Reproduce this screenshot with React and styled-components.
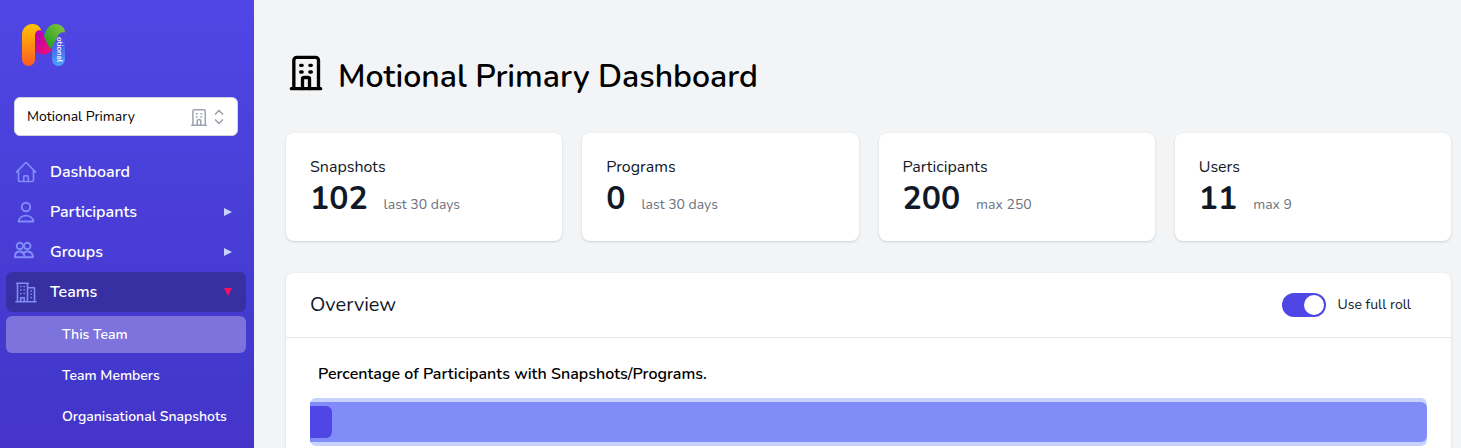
import { useState } from "react";
import styled, { createGlobalStyle } from "styled-components";

const GlobalStyle = createGlobalStyle`
  *, *::before, *::after {
    box-sizing: border-box;
  }
  body {
    margin: 0;
    background: #f3f4f6;
    color: #000;
    font-family: Nunito, Lato, "Open Sans", sans-serif;
    font-size: 16px;
    line-height: 24px;
  }
  button, input, select {
    font: inherit;
  }
`;

const Shell = styled.div`
  display: flex;
  height: 100vh;
  overflow: hidden;
`;

const Sidebar = styled.aside`
  flex: none;
  display: flex;
  flex-direction: column;
  width: 254px;
  padding: 20px 8px 0 6px;
  background: linear-gradient(to bottom, #4f46e5, #4338cc 85%, #4634ca);
`;

const LogoLink = styled.a`
  display: block;
  width: 52px;
  height: 52px;
  margin-left: 12px;

  svg {
    display: block;
  }
`;

const TeamPicker = styled.label`
  display: flex;
  align-items: center;
  position: relative;
  margin: 25px 8px 16px;

  svg {
    position: absolute;
    color: #9ca3af;
    pointer-events: none;
  }
  svg:first-of-type {
    right: 29px;
  }
  svg:last-of-type {
    right: 9px;
  }
`;

const TeamSelect = styled.select`
  appearance: none;
  width: 100%;
  height: 39px;
  padding: 0 56px 0 12px;
  border: 1px solid #d1d5db;
  border-radius: 6px;
  background: #fff;
  color: #000;
  font-size: 14px;
`;

const NavList = styled.ul`
  display: flex;
  flex-direction: column;
  margin: 0;
  padding: 0;
  list-style: none;
`;

const SubList = styled(NavList)`
  gap: 4px;
  padding-top: 4px;
`;

const NavLink = styled.a`
  display: flex;
  align-items: center;
  gap: 12px;
  width: 100%;
  height: 40px;
  padding: 0 12px 0 8px;
  border: 0;
  border-radius: 6px;
  background: ${(p) => (p.$open ? "#3730a3" : "transparent")};
  color: #fff;
  font-size: 16px;
  font-weight: 600;
  text-align: left;
  text-decoration: none;
  cursor: pointer;

  > svg {
    flex: none;
    color: #818cf8;
  }
  > span {
    flex: 1;
  }
`;

const Arrow = styled.svg`
  && {
    color: ${(p) => (p.$open ? "#f31260" : "#c7d2fe")};
  }
`;

const SubLink = styled.a`
  display: flex;
  align-items: center;
  height: 37px;
  padding-left: 56px;
  border-radius: 6px;
  background: ${(p) => (p.$active ? "#7c73dc" : "transparent")};
  color: #fff;
  font-size: 14px;
  font-weight: 600;
  text-decoration: none;
`;

const Main = styled.main`
  flex: 1;
  min-width: 0;
  padding: 52px 10px 32px 32px;
  overflow-y: auto;
  scrollbar-width: none;
`;

const PageTitle = styled.h1`
  display: flex;
  align-items: flex-start;
  gap: 12px;
  margin: 0 0 31px;
  font-size: 32px;
  font-weight: 600;
  line-height: 50px;
`;

const StatGrid = styled.dl`
  display: grid;
  grid-template-columns: repeat(4, 1fr);
  gap: 20px;
  margin: 0 0 32px;
`;

const Card = styled.div`
  border-radius: 8px;
  background: #fff;
  box-shadow: 0 1px 3px rgba(0, 0, 0, 0.1), 0 1px 2px rgba(0, 0, 0, 0.06);
`;

const StatCard = styled(Card)`
  padding: 22px 24px;
`;

const StatName = styled.dt`
  color: #111827;
`;

const StatValue = styled.dd`
  display: flex;
  align-items: baseline;
  gap: 16px;
  margin: 0;
  color: #111827;
  font-size: 32px;
  font-weight: 700;
  line-height: 40px;

  small {
    color: #6b7280;
    font-size: 14px;
    font-weight: 400;
    line-height: 20px;
  }
`;

const CardHeader = styled.header`
  display: flex;
  align-items: center;
  justify-content: space-between;
  height: 65px;
  padding: 0 40px 0 24px;
  border-bottom: 1px solid #e5e7eb;

  h2 {
    margin: 0;
    color: #111827;
    font-size: 20px;
    font-weight: 400;
  }
`;

const ToggleLabel = styled.label`
  display: flex;
  align-items: center;
  gap: 12px;
  color: #111827;
  font-size: 14px;
  cursor: pointer;
`;

const Toggle = styled.input`
  appearance: none;
  display: flex;
  width: 44px;
  height: 24px;
  margin: 0;
  padding: 2px;
  border-radius: 12px;
  background: #e5e7eb;
  cursor: pointer;

  &::before {
    content: "";
    width: 20px;
    height: 20px;
    border-radius: 50%;
    background: #fff;
  }
  &:checked {
    justify-content: flex-end;
    background: #4f46e5;
  }
`;

const CardBody = styled.div`
  padding: 24px;

  h3 {
    margin: 0 8px 12px;
    font-size: 16px;
    font-weight: 600;
  }
`;

const Track = styled.div`
  padding: 4px 0;
  border-radius: 6px;
  background: #c7d2fe;
`;

const Bar = styled.div`
  padding: 4px 0;
  border-radius: 0 6px 6px 0;
  background: #818cf8;
`;

const BarFill = styled.div`
  height: 32px;
  border-radius: 0 6px 6px 0;
  background: #4f46e5;
`;

const Icon = ({ size = 24, stroke = 1.5, viewBox = "0 0 24 24", children }) => (
  <svg
    width={size}
    height={size}
    viewBox={viewBox}
    fill="none"
    stroke="currentColor"
    strokeWidth={stroke}
    strokeLinecap="round"
    strokeLinejoin="round"
    aria-hidden="true"
  >
    {children}
  </svg>
);

const BuildingIcon = (props) => (
  <Icon {...props}>
    <path d="M3.200 22h17.600M4.700 22V5a1.800 1.800 0 0 1 1.800-1.800h11.200A1.800 1.800 0 0 1 19.500 5v17" />
    <path d="M9.900 22v-5.700a1 1 0 0 1 1-1h2.200a1 1 0 0 1 1 1V22M8.800 8h.9M14.300 8h.9M8.800 12h.9M14.300 12h.9" />
  </Icon>
);

const HomeIcon = () => (
  <Icon stroke={1.700}>
    <path d="M2.500 12.200 11.300 3a1 1 0 0 1 1.400 0l8.800 9.200M4.500 10.200v10a1.300 1.300 0 0 0 1.300 1.300h12.400a1.300 1.300 0 0 0 1.300-1.300v-10M9.700 21.500v-4.700a1 1 0 0 1 1-1h2.600a1 1 0 0 1 1 1v4.700" />
  </Icon>
);

const UserIcon = () => (
  <Icon stroke={1.900}>
    <circle cx="12" cy="7" r="4.200" />
    <path d="M4.600 21.500a7.500 7 0 0 1 14.800 0z" />
  </Icon>
);

const GroupIcon = () => (
  <Icon stroke={1.900}>
    <circle cx="5.900" cy="6" r="3.200" />
    <circle cx="13.300" cy="6" r="3.200" />
    <path d="M.9 17.200c0-3.600 2-5.700 4.900-5.700s4.700 2.100 4.700 5.700zM8.800 13.500c1-1.300 2.500-2 4.400-2 3.200 0 5.500 2.100 5.800 5.700h-8.500" />
  </Icon>
);

const TeamsIcon = () => (
  <Icon stroke={1.600}>
    <path d="M2 21.700h20M3.500 21.700V3.200h10v18.500M2.700 3.200h11.600M14 7.700h6.500v14M6.700 21.700v-4h3.600v4" />
    <path d="M6.700 6.500h.3M10 6.500h.3M6.700 10h.3M10 10h.3M6.700 13.500h.3M10 13.500h.3M17 11h.3M17 14.300h.3M17 17.600h.3" />
  </Icon>
);

const SelectorIcon = () => (
  <Icon size={20} stroke={1.700} viewBox="0 0 20 20">
    <path d="m6.500 7 3.500-3.500L13.500 7M6.500 13l3.500 3.500 3.500-3.500" />
  </Icon>
);

const Logo = () => (
  <svg width="52" height="52" viewBox="0 0 52 52" role="img" aria-label="Motional">
    <defs>
      <linearGradient id="orange" x1="0" y1="0" x2="0" y2="1">
        <stop offset="0" stopColor="#ffc400" />
        <stop offset="1" stopColor="#ff5a26" />
      </linearGradient>
      <linearGradient id="pink" x1="0" y1="0" x2="1" y2="1">
        <stop offset="0" stopColor="#a800c0" />
        <stop offset="1" stopColor="#ff0f68" />
      </linearGradient>
      <linearGradient id="green" x1="1" y1="0" x2="0" y2="1">
        <stop offset="0" stopColor="#8cc63f" />
        <stop offset="1" stopColor="#109a20" />
      </linearGradient>
      <linearGradient id="blue" x1="0" y1="0" x2="0" y2="1">
        <stop offset="0.200" stopColor="#5145e0" />
        <stop offset="1" stopColor="#4ba3ff" />
      </linearGradient>
    </defs>
    <path d="M34 26C37 17 41 11 47 12v27.500a6.500 6.500 0 0 1-13 0z" fill="url(#blue)" />
    <path d="M17 15c0-4 3-6 6-5 2 2 4 8 11 19-2 3.500-5 5.500-9 5.500-4 0-7-3-8-6z" fill="url(#pink)" />
    <path d="M26 16.500C28 9 31.500 4 37.500 4 43 4 47 8 47 12.500c-4.500-1-6.500 2-8.500 6-2 4-4 8-6 10.500C30 26 28 21 26 16.500z" fill="url(#green)" />
    <path d="M4 15C4 8 9 4 14 4c5 0 7.500 2 9.500 6.500-4.500-1-6.500 1.500-6.500 5.500v23.500a6.500 6.500 0 0 1-13 0z" fill="url(#orange)" />
    <text
      transform="translate(38.500 17) rotate(90)"
      fill="#fff"
      fontFamily="Nunito, Lato, sans-serif"
      fontSize="8"
      fontWeight="600"
    >
      otional
    </text>
  </svg>
);

const NAV = [
  { name: "Dashboard", icon: HomeIcon },
  { name: "Participants", icon: UserIcon, children: [] },
  { name: "Groups", icon: GroupIcon, children: [] },
  {
    name: "Teams",
    icon: TeamsIcon,
    children: ["This Team", "Team Members", "Organisational Snapshots"],
  },
];

const STATS = [
  { name: "Snapshots", value: 102, note: "last 30 days" },
  { name: "Programs", value: 0, note: "last 30 days" },
  { name: "Participants", value: 200, note: "max 250" },
  { name: "Users", value: 11, note: "max 9" },
];

const NavItem = ({ item, open, onToggle }) => {
  const ItemIcon = item.icon;
  if (!item.children) {
    return (
      <li>
        <NavLink href="#dashboard">
          <ItemIcon />
          <span>{item.name}</span>
        </NavLink>
      </li>
    );
  }
  return (
    <li>
      <NavLink as="button" type="button" $open={open} aria-expanded={open} onClick={onToggle}>
        <ItemIcon />
        <span>{item.name}</span>
        <Arrow $open={open} width="12" height="12" viewBox="0 0 12 12" fill="currentColor" aria-hidden="true">
          <path d={open ? "M2 2h8L6 10z" : "M2 2v8l8-4z"} />
        </Arrow>
      </NavLink>
      {open && (
        <SubList>
          {item.children.map((child, i) => (
            <li key={child}>
              <SubLink href="#team" $active={i === 0}>
                {child}
              </SubLink>
            </li>
          ))}
        </SubList>
      )}
    </li>
  );
};

const App = () => {
  const [open, setOpen] = useState("Teams");
  const [fullRoll, setFullRoll] = useState(true);
  const percent = 2;

  return (
    <Shell>
      <GlobalStyle />
      <Sidebar>
        <LogoLink href="#home">
          <Logo />
        </LogoLink>
        <TeamPicker>
          <TeamSelect aria-label="Team">
            <option>Motional Primary</option>
          </TeamSelect>
          <BuildingIcon size={20} stroke={1.800} />
          <SelectorIcon />
        </TeamPicker>
        <nav>
          <NavList>
            {NAV.map((item) => (
              <NavItem
                key={item.name}
                item={item}
                open={open === item.name}
                onToggle={() => setOpen(open === item.name ? "" : item.name)}
              />
            ))}
          </NavList>
        </nav>
      </Sidebar>
      <Main>
        <PageTitle>
          <BuildingIcon size={40} stroke={2} />
          Motional Primary Dashboard
        </PageTitle>
        <StatGrid>
          {STATS.map((stat) => (
            <StatCard key={stat.name}>
              <StatName>{stat.name}</StatName>
              <StatValue>
                {stat.value}
                <small>{stat.note}</small>
              </StatValue>
            </StatCard>
          ))}
        </StatGrid>
        <Card as="section">
          <CardHeader>
            <h2>Overview</h2>
            <ToggleLabel>
              <Toggle
                type="checkbox"
                role="switch"
                checked={fullRoll}
                onChange={(e) => setFullRoll(e.target.checked)}
              />
              Use full roll
            </ToggleLabel>
          </CardHeader>
          <CardBody>
            <h3>Percentage of Participants with Snapshots/Programs.</h3>
            <Track>
              <Bar>
                <BarFill style={{ width: `${percent}%` }} />
              </Bar>
            </Track>
          </CardBody>
        </Card>
      </Main>
    </Shell>
  );
};

export default App;
